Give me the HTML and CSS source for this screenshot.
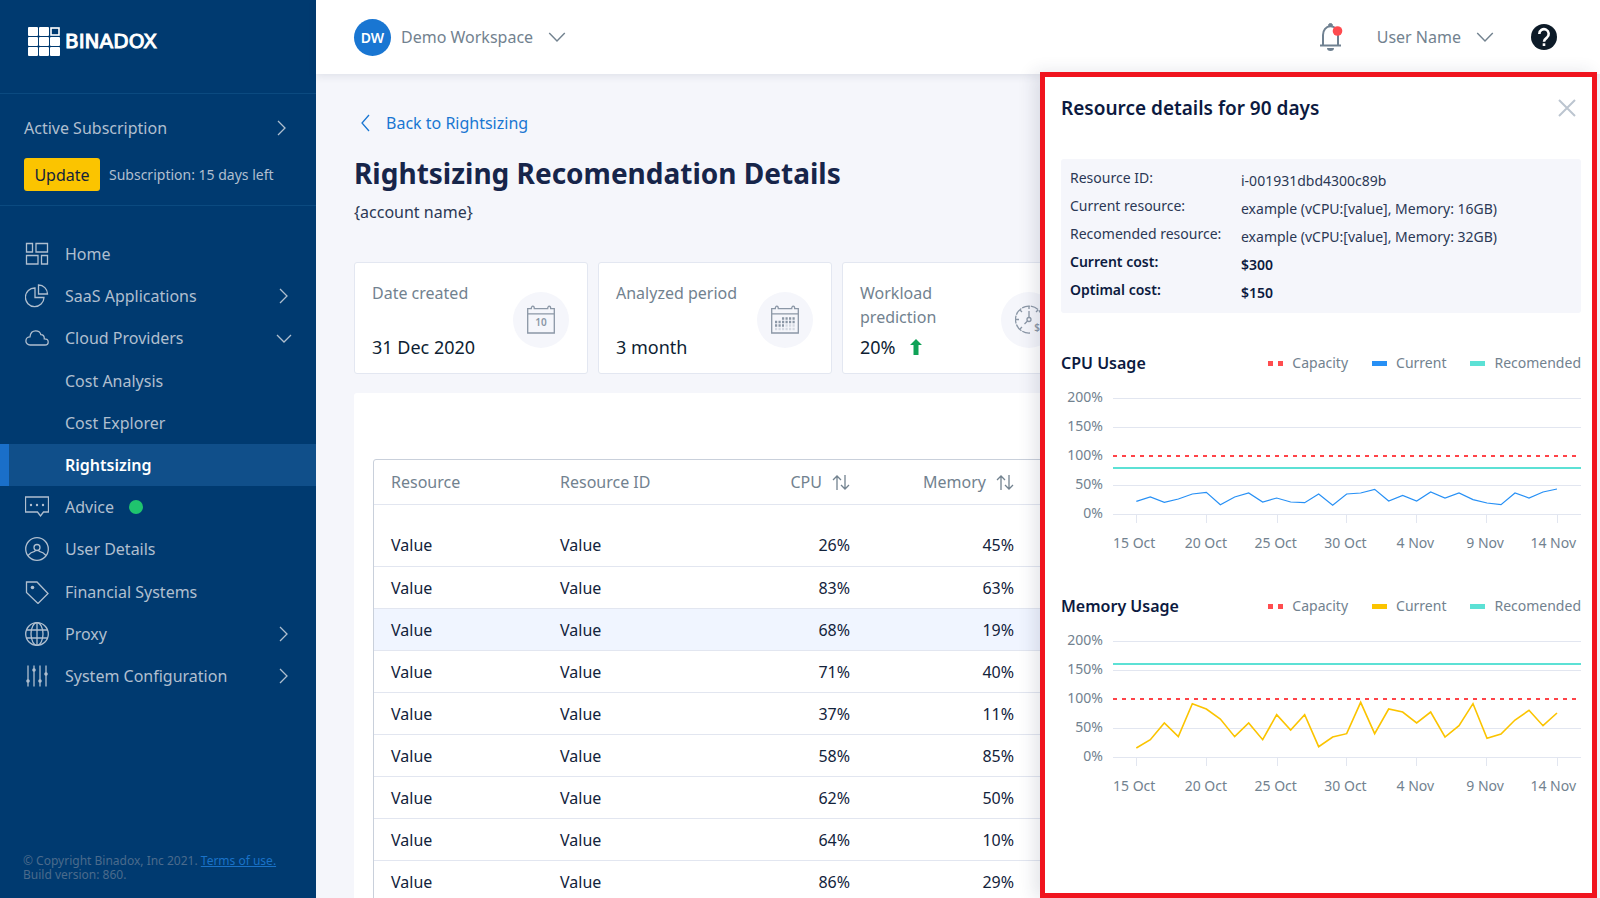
FILE: index.html
```html
<!DOCTYPE html>
<html lang="en">
<head>
<meta charset="utf-8">
<title>Binadox – Rightsizing Recomendation Details</title>
<link rel="stylesheet" href="styles.css">
</head>
<body>
<div class="app">
  <aside class="sidebar">
    <a class="logo" href="#">
      <svg class="logo-mark" viewBox="0 0 32 29" aria-hidden="true">
        <g fill="#fff">
          <rect x="0" y="0" width="10" height="9" rx="1"/><rect x="11" y="0" width="10" height="9" rx="1"/>
          <rect x="0" y="10" width="10" height="9" rx="1"/><rect x="11" y="10" width="10" height="9" rx="1"/><rect x="22" y="10" width="10" height="9" rx="1"/>
          <rect x="0" y="20" width="10" height="9" rx="1"/><rect x="11" y="20" width="10" height="9" rx="1"/><rect x="22" y="20" width="10" height="9" rx="1"/>
        </g>
        <rect x="23" y="1" width="8" height="7" fill="none" stroke="#fff" stroke-width="1.6"/>
      </svg>
      <span class="logo-text">BINADOX</span>
    </a>
    <section class="subscription">
      <a class="subscription-link" href="#">Active Subscription
        <svg class="chevron-right" viewBox="0 0 9 16"><path d="M1 1l7 7-7 7"/></svg>
      </a>
      <div class="subscription-row">
        <button class="update" type="button">Update</button>
        <span class="days">Subscription: 15 days left</span>
      </div>
    </section>
    <nav class="nav">
      <a class="nav-item" href="#">
        <svg class="nav-icon" viewBox="0 0 24 24"><path d="M1.5 1.5h6v8.500h-6zM11 1.500h11.500v8.500H11zM1.500 13.500H13v8.500H1.500zM16.500 13.500h6v8.500h-6z"/></svg>
        Home</a>
      <a class="nav-item" href="#">
        <svg class="nav-icon" viewBox="0 0 24 24"><path d="M10 4v9.500h9a9.300 9.300 0 1 1-9-9.500z"/><path d="M13.500 1a9 9 0 0 1 9 9h-9z"/></svg>
        SaaS Applications
        <svg class="chevron-right" viewBox="0 0 9 16"><path d="M1 1l7 7-7 7"/></svg></a>
      <a class="nav-item" href="#">
        <svg class="nav-icon" viewBox="0 0 24 24"><path d="M5 19a4.100 4.100 0 0 1 0-8.200c.4-3.600 2.700-5.900 5.700-5.900 2.500 0 4.500 1.400 5.200 3.800 2.200.1 3.500 1.700 3.400 4.100 2.300-.1 3.900 1.200 3.900 3.100S21.900 19 20 19z"/></svg>
        Cloud Providers
        <svg class="chevron-down" viewBox="0 0 16 9"><path d="M1 1l7 7 7-7"/></svg></a>
      <a class="nav-item nav-sub" href="#">Cost Analysis</a>
      <a class="nav-item nav-sub" href="#">Cost Explorer</a>
      <a class="nav-item nav-sub nav-active" href="#">Rightsizing</a>
      <a class="nav-item" href="#">
        <svg class="nav-icon" viewBox="0 0 24 24"><path d="M.5 2h23v15h-5l-3 4-3-4H.5z"/><path class="dots" d="M6 10h0M12 10h0M18 10h0"/></svg>
        Advice <span class="status-dot"></span></a>
      <a class="nav-item" href="#">
        <svg class="nav-icon" viewBox="0 0 24 24"><circle cx="12" cy="12" r="11.300"/><circle cx="12" cy="10.500" r="3"/><path d="M3 18.500c2-2.500 4-3.700 6.700-4.200l1-1.200M21 18.500c-2-2.500-4-3.700-6.700-4.200l-1-1.200"/></svg>
        User Details</a>
      <a class="nav-item" href="#">
        <svg class="nav-icon" viewBox="0 0 24 24"><path d="M1.500 2H12l11 11.500L13 23.500 1.500 12.500z"/><circle class="solid" cx="7.500" cy="7.500" r="1.800"/></svg>
        Financial Systems</a>
      <a class="nav-item" href="#">
        <svg class="nav-icon" viewBox="0 0 24 24"><circle cx="12" cy="12" r="11.300"/><ellipse cx="12" cy="12" rx="6" ry="11.300"/><path d="M12 .7v22.600M2 8h20M2 16h20"/></svg>
        Proxy
        <svg class="chevron-right" viewBox="0 0 9 16"><path d="M1 1l7 7-7 7"/></svg></a>
      <a class="nav-item" href="#">
        <svg class="nav-icon" viewBox="0 0 24 24"><path d="M3 1.500v21M9 1.500v21M15 1.500v21M21 1.500v21"/><circle class="solid" cx="3" cy="17" r="1.800"/><circle class="solid" cx="9" cy="6" r="1.800"/><circle class="solid" cx="15" cy="17" r="1.800"/><circle class="solid" cx="21" cy="10" r="1.800"/></svg>
        System Configuration
        <svg class="chevron-right" viewBox="0 0 9 16"><path d="M1 1l7 7-7 7"/></svg></a>
    </nav>
    <footer class="legal">© Copyright Binadox, Inc 2021. <a href="#">Terms of use.</a><br>Build version: 860.</footer>
  </aside>

  <div class="main">
    <header class="topbar">
      <button class="menu-button" type="button">
        <span class="avatar">DW</span>
        <span>Demo Workspace</span>
        <svg class="chevron-down" viewBox="0 0 16 9"><path d="M1 1l7 7 7-7"/></svg>
      </button>
      <div class="topbar-right">
        <button class="icon-button" type="button" aria-label="Notifications">
          <svg class="bell" viewBox="0 0 24 28"><path d="M9.500 2.500a2 2 0 0 1 4 0z" fill="#6f8191" stroke="#6f8191"/><path d="M4 22.500V12c0-5 3-8.700 7.500-8.700S19 7 19 12v10.500" fill="none" stroke="#6f8191" stroke-width="2"/><path d="M1 22.500h21" stroke="#6f8191" stroke-width="2"/><path d="M8 25h7a3.500 3 0 0 1-7 0z" fill="#6f8191"/><circle cx="18.500" cy="8" r="4.800" fill="#ff4b4f"/></svg>
        </button>
        <button class="menu-button user-menu" type="button">
          <span>User Name</span>
          <svg class="chevron-down" viewBox="0 0 16 9"><path d="M1 1l7 7 7-7"/></svg>
        </button>
        <button class="icon-button" type="button" aria-label="Help">
          <svg class="help" viewBox="0 0 26 26"><circle cx="13" cy="13" r="13" fill="#0d1b28"/><path d="M8.300 10a4.700 4.700 0 1 1 7.600 3.600c-1.900 1.400-2.900 2-2.900 4.100" fill="none" stroke="#fff" stroke-width="2.600"/><rect x="11.700" y="19.300" width="2.600" height="2.700" fill="#fff"/></svg>
        </button>
      </div>
    </header>

    <main class="content">
      <a class="back" href="#"><svg class="chevron-left" viewBox="0 0 9 18"><path d="M8 1L1 9l7 8"/></svg>Back to Rightsizing</a>
      <h1 class="title">Rightsizing Recomendation Details</h1>
      <p class="account">{account name}</p>

      <div class="cards">
        <section class="card">
          <div class="card-text"><h2 class="card-label">Date created</h2><p class="card-value">31 Dec 2020</p></div>
          <span class="card-icon">
            <svg viewBox="0 0 28 29"><path d="M.7 3.700h3.600c0-3.500 3-3.500 3 0h13.400c0-3.500 3-3.500 3 0h3.600V28H.7zM.7 8.800h26.600"/><text x="14" y="21" text-anchor="middle">10</text></svg>
          </span>
        </section>
        <section class="card">
          <div class="card-text"><h2 class="card-label">Analyzed period</h2><p class="card-value">3 month</p></div>
          <span class="card-icon">
            <svg viewBox="0 0 28 29"><path d="M.7 3.700h3.600c0-3.500 3-3.500 3 0h13.400c0-3.500 3-3.500 3 0h3.600V28H.7zM.7 8.800h26.600"/><g class="days-grid"><path d="M11 13.500h13M4 17h20M4 20.500h9"/><path class="faint" d="M14.500 20.500H24M4 24h20"/></g></svg>
          </span>
        </section>
        <section class="card">
          <div class="card-text"><h2 class="card-label">Workload prediction</h2><p class="card-value">20% <svg class="arrow-up" viewBox="0 0 12 16" role="img" aria-label="up"><path d="M6 0l6 6H8.500v10h-5V6H0z"/></svg></p></div>
          <span class="card-icon">
            <svg viewBox="0 0 28 29"><path d="M15 28A13.500 13.500 0 1 1 27.500 14.500" stroke-dasharray="8 1"/><path d="M14 1v3M1 14.500h3M5 5l2 2M23 5l-2 2M5 24l2-2M14 6v6.500M12.500 16L9.500 19"/><circle cx="14" cy="14.500" r="2"/><text x="22" y="26" text-anchor="middle">$</text></svg>
          </span>
        </section>
      </div>

      <section class="panel">
        <table class="table">
          <colgroup><col class="col-first"><col class="col"><col class="col"><col class="col"><col></colgroup>
          <thead>
            <tr>
              <th scope="col">Resource</th>
              <th scope="col">Resource ID</th>
              <th scope="col" class="num"><button class="sort" type="button">CPU <svg viewBox="0 0 18 15"><path d="M5 15V1M1 5l4-4 4 4M13 0v14M9 10l4 4 4-4"/></svg></button></th>
              <th scope="col" class="num"><button class="sort" type="button">Memory <svg viewBox="0 0 18 15"><path d="M5 15V1M1 5l4-4 4 4M13 0v14M9 10l4 4 4-4"/></svg></button></th>
              <td></td>
            </tr>
          </thead>
          <tbody>
            <tr class="first"><td>Value</td><td>Value</td><td class="num">26%</td><td class="num">45%</td><td></td></tr>
            <tr><td>Value</td><td>Value</td><td class="num">83%</td><td class="num">63%</td><td></td></tr>
            <tr class="selected"><td>Value</td><td>Value</td><td class="num">68%</td><td class="num">19%</td><td></td></tr>
            <tr><td>Value</td><td>Value</td><td class="num">71%</td><td class="num">40%</td><td></td></tr>
            <tr><td>Value</td><td>Value</td><td class="num">37%</td><td class="num">11%</td><td></td></tr>
            <tr><td>Value</td><td>Value</td><td class="num">58%</td><td class="num">85%</td><td></td></tr>
            <tr><td>Value</td><td>Value</td><td class="num">62%</td><td class="num">50%</td><td></td></tr>
            <tr><td>Value</td><td>Value</td><td class="num">64%</td><td class="num">10%</td><td></td></tr>
            <tr><td>Value</td><td>Value</td><td class="num">86%</td><td class="num">29%</td><td></td></tr>
          </tbody>
        </table>
      </section>
    </main>
  </div>

  <aside class="drawer">
    <header class="drawer-head">
      <h2 class="drawer-title">Resource details for 90 days</h2>
      <button class="icon-button" type="button" aria-label="Close"><svg class="close" viewBox="0 0 18 18"><path d="M1 1l16 16M17 1L1 17"/></svg></button>
    </header>
    <dl class="info">
      <dt>Resource ID:</dt><dd>i-001931dbd4300c89b</dd>
      <dt>Current resource:</dt><dd>example (vCPU:[value], Memory: 16GB)</dd>
      <dt>Recomended resource:</dt><dd>example (vCPU:[value], Memory: 32GB)</dd>
      <dt class="strong">Current cost:</dt><dd class="strong">$300</dd>
      <dt class="strong">Optimal cost:</dt><dd class="strong">$150</dd>
    </dl>

    <section class="chart">
      <header class="chart-head">
        <h3 class="chart-title">CPU Usage</h3>
        <ul class="legend">
          <li><i class="key key-capacity"></i>Capacity</li>
          <li><i class="key key-cpu"></i>Current</li>
          <li><i class="key key-recomended"></i>Recomended</li>
        </ul>
      </header>
      <div class="chart-body">
        <div class="y-axis"><span>200%</span><span>150%</span><span>100%</span><span>50%</span><span>0%</span></div>
        <svg class="plot" viewBox="0 0 1404 420" preserveAspectRatio="none">
          <path class="grid" d="M0 24H1404M0 111H1404M0 285H1404M0 372H1404M70 372V399M281 372V399M492 372V399M699 372V399M910 372V399M1121 372V399M1332 372V399"/>
          <path class="capacity" d="M0 198H1404"/>
          <path class="recomended" d="M0 233H1404"/>
          <polyline class="cpu" points="70,334 112,321 154,337 196,327 238,312 280,307 322,344 365,321 407,309 449,336 491,324 533,336 575,338 617,312 659,346 701,312 743,309 785,298 827,333 869,316 911,333 953,306 996,324 1038,309 1080,329 1122,339 1164,344 1206,309 1248,324 1290,306 1332,297"/>
        </svg>
        <div class="x-axis"><span>15 Oct</span><span>20 Oct</span><span>25 Oct</span><span>30 Oct</span><span>4 Nov</span><span>9 Nov</span><span>14 Nov</span></div>
      </div>
    </section>

    <section class="chart">
      <header class="chart-head">
        <h3 class="chart-title">Memory Usage</h3>
        <ul class="legend">
          <li><i class="key key-capacity"></i>Capacity</li>
          <li><i class="key key-memory"></i>Current</li>
          <li><i class="key key-recomended"></i>Recomended</li>
        </ul>
      </header>
      <div class="chart-body">
        <div class="y-axis"><span>200%</span><span>150%</span><span>100%</span><span>50%</span><span>0%</span></div>
        <svg class="plot" viewBox="0 0 1404 420" preserveAspectRatio="none">
          <path class="grid" d="M0 24H1404M0 111H1404M0 285H1404M0 372H1404M70 372V399M281 372V399M492 372V399M699 372V399M910 372V399M1121 372V399M1332 372V399"/>
          <path class="capacity" d="M0 198H1404"/>
          <path class="recomended" d="M0 92H1404"/>
          <polyline class="memory" points="70,345 112,320 154,270 196,311 238,212 280,228 322,258 365,311 407,270 449,320 491,245 533,291 575,245 617,341 659,312 701,302 743,208 785,302 827,228 869,237 911,270 953,237 996,312 1038,278 1080,212 1122,316 1164,303 1206,261 1248,232 1290,278 1332,240"/>
        </svg>
        <div class="x-axis"><span>15 Oct</span><span>20 Oct</span><span>25 Oct</span><span>30 Oct</span><span>4 Nov</span><span>9 Nov</span><span>14 Nov</span></div>
      </div>
    </section>
  </aside>
</div>
</body>
</html>
```
FILE: styles.css
```css
* { box-sizing: border-box; }
body, h1, h2, h3, p, ul, dl, dd { margin: 0; padding: 0; }
body {
  font-family: "Noto Sans", "Open Sans", sans-serif;
  font-size: 16px;
  line-height: 24px;
  color: #13233b;
}
a { color: inherit; text-decoration: none; }
button { font: inherit; color: inherit; background: none; border: 0; padding: 0; cursor: pointer; }
svg { display: block; flex: none; fill: none; }

.app { position: relative; display: flex; height: 100vh; overflow: hidden; background: #f5f6fb; }

/* Sidebar */
.sidebar { flex: 0 0 316px; display: flex; flex-direction: column; background: #003a70; color: #b0bfcf; }
.logo { display: flex; align-items: center; gap: 5px; height: 94px; padding: 0 28px 11px; border-bottom: 1px solid #0b4a80; }
.logo-mark { width: 32px; height: 29px; }
.logo-text { font-family: "DejaVu Sans", sans-serif; font-size: 20px; color: #fff; -webkit-text-stroke: 1px #fff; }
.subscription { height: 112px; padding: 22px 28px 0 24px; border-bottom: 1px solid #0b4a80; }
.subscription-link { display: flex; align-items: center; justify-content: space-between; }
.subscription-link .chevron-right { margin-right: 2px; }
.subscription-row { display: flex; align-items: center; gap: 9px; margin-top: 18px; }
.update { width: 76px; height: 33px; border-radius: 3px; background: #fbc400; color: #13233b; }
.days { font-size: 14px; }
.nav { display: grid; grid-auto-rows: 1fr; min-height: 464px; margin-top: 27px; }
.nav-item { display: flex; align-items: center; padding: 0 28px 0 25px; }
.nav-icon { width: 24px; height: 24px; margin-right: 16px; stroke: #b0bfcf; stroke-width: 1.3; }
.nav-icon .solid { fill: #b0bfcf; stroke: none; }
.nav-icon .dots { stroke-width: 2.4; stroke-linecap: round; }
.nav-sub { padding-left: 65px; }
.nav-active { background: #104f8a; color: #fff; font-weight: 600; border-left: 9px solid #1a6fc9; padding-left: 56px; }
.status-dot { width: 14px; height: 14px; margin-left: 15px; border-radius: 50%; background: #1fc46e; }
.chevron-right, .chevron-down, .chevron-left { stroke: currentColor; stroke-width: 1.3; }
.chevron-right { width: 9px; height: 16px; }
.chevron-down { width: 16px; height: 9px; }
.chevron-left { width: 9px; height: 18px; }
.nav-item .chevron-right, .nav-item .chevron-down { margin-left: auto; }
.nav-item .chevron-down { margin-right: -4px; }
.legal { margin-top: auto; padding: 0 23px 16px; font-size: 12px; line-height: 14px; color: #4b6b8c; }
.legal a { color: #1a72c8; text-decoration: underline; }

/* Top bar */
.main { flex: 1; min-width: 0; display: flex; flex-direction: column; }
.topbar { z-index: 1; flex: none; display: flex; align-items: center; justify-content: space-between; height: 74px; padding: 0 43px 0 38px; background: #fff; box-shadow: 0 2px 8px rgba(30, 40, 70, 0.1); color: #72828f; }
.menu-button { display: flex; align-items: center; gap: 15px; }
.avatar { width: 37px; height: 37px; margin-right: -5px; border-radius: 50%; background: #1976d2; color: #fff; font-size: 14px; font-weight: 600; line-height: 37px; }
.topbar .chevron-down { width: 18px; height: 10px; }
.topbar-right { display: flex; align-items: center; }
.bell { width: 24px; height: 28px; }
.help { width: 26px; height: 26px; }
.user-menu { margin: 0 37px 0 34px; }

/* Page */
.content { padding: 37px 36px 0 38px; }
.back { display: flex; align-items: center; gap: 16px; padding-left: 7px; color: #1976d2; }
.title { margin-top: 18px; font-size: 28px; line-height: 40px; font-weight: 700; color: #17254a; }
.account { margin-top: 7px; color: #2b3855; }
.cards { display: grid; grid-template-columns: repeat(5, 1fr); gap: 10px; margin-top: 38px; }
.card { display: flex; align-items: center; justify-content: space-between; height: 112px; padding: 3px 18px 0 17px; background: #fff; border: 1px solid #e3e7f1; border-radius: 3px; }
.card-text { display: flex; flex-direction: column; justify-content: space-between; height: 78px; }
.card-label { font-size: 16px; line-height: 24px; font-weight: 400; color: #72828f; }
.card-value { display: flex; align-items: center; gap: 14px; font-size: 18px; line-height: 24px; color: #0e1e33; }
.arrow-up { width: 12px; height: 16px; fill: #0fa257; }
.card-icon { flex: none; display: grid; place-items: center; width: 56px; height: 56px; border-radius: 50%; background: #f5f6fb; }
.card-icon svg { width: 28px; height: 29px; stroke: #8b97a6; stroke-width: 1.3; }
.card-icon text { fill: #8b97a6; stroke: none; font-size: 10px; font-weight: 600; }
.days-grid { stroke-width: 2.4; stroke-dasharray: 2.2 1.3; }
.days-grid .faint { stroke: #d5dae3; }

.panel { margin-top: 19px; padding: 66px 19px 19px; background: #fff; border-radius: 3px; }
.table { width: 100%; table-layout: fixed; border-collapse: separate; border-spacing: 0; border: 1px solid #c9d0db; border-radius: 3px; }
.col-first { width: 169px; }
.col { width: 164px; }
.table th, .table td { height: 42px; padding: 0 17px; border-bottom: 1px solid #e2e6f0; text-align: left; font-weight: 400; }
.table thead th, .table thead td { height: 45px; color: #72828f; }
.table .first td { height: 62px; padding-top: 19px; }
.table .selected td { background: #f0f5ff; }
.table .num { text-align: right; padding-right: 21px; }
.sort { display: inline-flex; align-items: center; gap: 10px; }
.sort svg { width: 18px; height: 15px; stroke: currentColor; stroke-width: 1.3; }

/* Resource drawer */
.drawer { position: absolute; z-index: 2; top: 72px; right: 3px; bottom: 0; width: 557px; padding: 0 11px 0 16px; background: #fff; border: 5px solid #f0141e; box-shadow: -6px 0 16px rgba(30, 40, 70, 0.12); }
.drawer-head { display: flex; align-items: center; justify-content: space-between; height: 61px; padding-right: 5px; }
.drawer-title { font-size: 19px; line-height: 28px; font-weight: 600; color: #0c1a40; }
.close { width: 18px; height: 18px; stroke: #bcc5d0; stroke-width: 2; }
.info { display: grid; grid-template-columns: 171px 1fr; grid-auto-rows: 28px; min-height: 154px; margin-top: 21px; padding: 5px 9px; background: #f5f6fb; border-radius: 3px; font-size: 14px; line-height: 28px; color: #2b3855; }
.info dd { padding-top: 3px; }
.info .strong { font-weight: 600; color: #0c1a40; }

.chart { margin-top: 36px; }
.chart + .chart { margin-top: 37px; }
.chart-head { display: flex; align-items: center; justify-content: space-between; height: 28px; }
.chart-title { font-size: 16px; line-height: 28px; font-weight: 600; color: #0c1a40; }
.legend { display: flex; gap: 24px; list-style: none; font-size: 14px; color: #72828f; }
.legend li { display: flex; align-items: center; gap: 9px; }
.key { width: 15px; height: 5px; }
.key-capacity { background: linear-gradient(90deg, #ff4d4f 5px, transparent 5px 10px, #ff4d4f 10px); }
.key-cpu { background: #2790f5; }
.key-memory { background: #fbc400; }
.key-recomended { background: #5ce1d5; }
.chart-body { display: grid; grid-template-columns: 42px 1fr; column-gap: 10px; margin-top: 13px; font-size: 14px; color: #72828f; }
.y-axis { display: flex; flex-direction: column; text-align: right; line-height: 29px; margin-top: -8px; }
.plot { width: 100%; height: 140px; overflow: visible; }
.plot * { vector-effect: non-scaling-stroke; }
.grid { stroke: #e2e6f0; shape-rendering: crispEdges; }
.capacity { stroke: #ff4348; stroke-width: 2; stroke-dasharray: 4 5; shape-rendering: crispEdges; }
.recomended { stroke: #5ce1d5; stroke-width: 2; shape-rendering: crispEdges; }
.cpu { stroke: #2790f5; stroke-width: 1.2; }
.memory { stroke: #fbc400; stroke-width: 1.6; }
.x-axis { grid-column: 2; display: grid; grid-template-columns: 58px repeat(5, 1fr) 56px; padding-right: 5px; text-align: center; line-height: 25px; }
.x-axis span:first-child { text-align: left; }
.x-axis span:last-child { text-align: right; }
```
